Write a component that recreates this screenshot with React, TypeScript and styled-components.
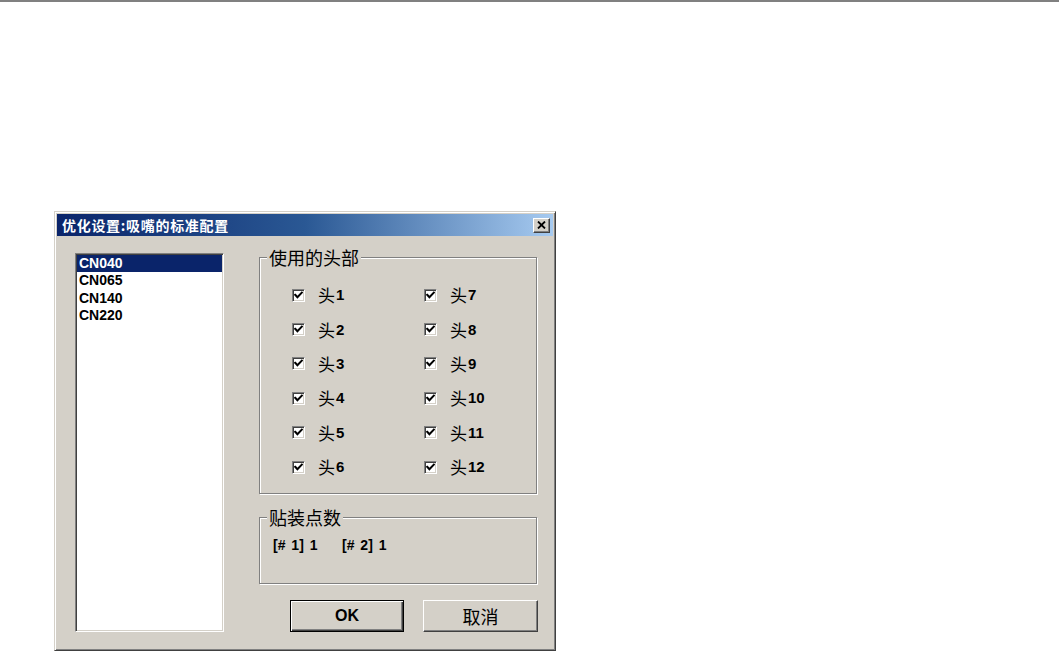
import React from "react";
import styled, { createGlobalStyle, css } from "styled-components";

const GlobalStyle = createGlobalStyle`
  body {
    margin: 0;
    background: #ffffff;
    font-family: "Liberation Sans", "Noto Sans CJK SC", sans-serif;
  }
`;

const nozzles = ["CN040", "CN065", "CN140", "CN220"];
const heads = Array.from({ length: 12 }, (_, i) => i + 1);
const counts = [
  { head: 1, value: 1 },
  { head: 2, value: 1 },
];

const CheckMark = () => (
  <svg width="9" height="9" viewBox="0 0 9 9">
    <polyline
      points="1.2,3.8 3.4,6.2 7.8,1.6"
      fill="none"
      stroke="#000"
      strokeWidth="2"
      strokeLinecap="square"
    />
  </svg>
);

const CloseGlyph = () => (
  <svg width="9" height="8" viewBox="0 0 9 8">
    <path d="M1 0.5 L8 7.5 M8 0.5 L1 7.5" stroke="#000" strokeWidth="1.8" />
  </svg>
);

export default function App() {
  return (
    <>
      <GlobalStyle />
      <TopRule />
      <Dialog>
        <TitleBar>
          <TitleText>优化设置:吸嘴的标准配置</TitleText>
          <CloseButton aria-label="关闭">
            <CloseGlyph />
          </CloseButton>
        </TitleBar>
        <Body>
          <ListBox>
            {nozzles.map((n, i) => (
              <ListItem key={n} $selected={i === 0}>
                {n}
              </ListItem>
            ))}
          </ListBox>
          <Side>
            <GroupBox $height={237}>
              <GroupLabel>使用的头部</GroupLabel>
              <HeadGrid>
                {heads.map((h) => (
                  <CheckItem key={h}>
                    <CheckBox>
                      <CheckMark />
                    </CheckBox>
                    <HeadLabel>
                      <Han>头</Han>
                      {h}
                    </HeadLabel>
                  </CheckItem>
                ))}
              </HeadGrid>
            </GroupBox>
            <GroupBox $height={67} $gapTop={23}>
              <GroupLabel>贴装点数</GroupLabel>
              <Counts>
                {counts.map((c) => (
                  <Count key={c.head}>
                    [# {c.head}] {c.value}
                  </Count>
                ))}
              </Counts>
            </GroupBox>
            <ButtonRow>
              <Button $default>OK</Button>
              <Button $cjk>取消</Button>
            </ButtonRow>
          </Side>
        </Body>
      </Dialog>
    </>
  );
}

const TopRule = styled.div`
  height: 2px;
  background: #808080;
`;

const Dialog = styled.div`
  box-sizing: border-box;
  width: 502px;
  height: 440px;
  margin: 209px 0 0 54px;
  padding: 2px;
  background: #d4d0c8;
  border: 1px solid;
  border-color: #d4d0c8 #404040 #404040 #d4d0c8;
  box-shadow: inset 1px 1px 0 #ffffff, inset -1px -1px 0 #808080;
`;

const TitleBar = styled.div`
  height: 22px;
  display: flex;
  align-items: center;
  justify-content: space-between;
  padding: 0 3px 0 5px;
  background: linear-gradient(to right, #0a246a 0%, #2a5894 50%, #a6caf0 100%);
`;

const TitleText = styled.span`
  color: #ffffff;
  font-family: "Noto Sans CJK SC", sans-serif;
  font-weight: 700;
  font-size: 14px;
  letter-spacing: 0.7px;
  line-height: 22px;
  white-space: nowrap;
`;

const CloseButton = styled.button`
  box-sizing: border-box;
  width: 17px;
  height: 15px;
  padding: 0;
  display: flex;
  align-items: center;
  justify-content: center;
  background: #d4d0c8;
  border: 1px solid;
  border-color: #ffffff #404040 #404040 #ffffff;
  box-shadow: inset -1px -1px 0 #808080;
`;

const Body = styled.div`
  display: grid;
  grid-template-columns: 149px 279px;
  column-gap: 35px;
  padding: 17px 15px 0 18px;
`;

const ListBox = styled.div`
  box-sizing: border-box;
  height: 379px;
  padding: 1px;
  background: #ffffff;
  border: 1px solid;
  border-color: #808080 #ffffff #ffffff #808080;
  box-shadow: inset 1px 1px 0 #404040, inset -1px -1px 0 #d4d0c8;
`;

const ListItem = styled.div<{ $selected?: boolean }>`
  height: 17.4px;
  padding-left: 2px;
  font-size: 14px;
  font-weight: 700;
  line-height: 17.4px;
  color: #000000;
  ${(p) =>
    p.$selected &&
    css`
      background: #0a246a;
      color: #ffffff;
    `}
`;

const Side = styled.div`
  display: flex;
  flex-direction: column;
  padding-top: 4px;
`;

const GroupBox = styled.div<{ $height: number; $gapTop?: number }>`
  position: relative;
  box-sizing: border-box;
  width: 278px;
  height: ${(p) => p.$height}px;
  margin-top: ${(p) => p.$gapTop ?? 0}px;
  border: 1px solid #808080;
  box-shadow: 1px 1px 0 #ffffff, inset 1px 1px 0 #ffffff;
`;

const GroupLabel = styled.span`
  position: absolute;
  top: -12px;
  left: 7px;
  padding: 0 2px;
  background: #d4d0c8;
  font-family: "Noto Sans CJK SC", sans-serif;
  font-size: 18px;
  line-height: 22px;
  color: #000000;
`;

const HeadGrid = styled.div`
  display: grid;
  grid-template-columns: 132px 1fr;
  grid-template-rows: repeat(6, 34.4px);
  grid-auto-flow: column;
  padding: 20px 0 0 32px;
`;

const CheckItem = styled.div`
  display: flex;
  align-items: center;
  gap: 13px;
`;

const CheckBox = styled.span`
  box-sizing: border-box;
  width: 13px;
  height: 13px;
  display: flex;
  align-items: center;
  justify-content: center;
  background: #ffffff;
  border: 1px solid;
  border-color: #808080 #ffffff #ffffff #808080;
  box-shadow: inset 1px 1px 0 #404040, inset -1px -1px 0 #d4d0c8;
`;

const HeadLabel = styled.span`
  display: flex;
  align-items: center;
  font-size: 15px;
  font-weight: 700;
  line-height: 18px;
  color: #000000;
`;

const Han = styled.span`
  font-family: "Noto Sans CJK SC", sans-serif;
  font-size: 17px;
  font-weight: 400;
  margin-right: 1px;
`;

const Counts = styled.div`
  display: flex;
  padding: 19px 0 0 13px;
`;

const Count = styled.span`
  width: 69px;
  font-size: 14px;
  font-weight: 700;
  line-height: 16px;
  word-spacing: 2px;
  color: #000000;
  white-space: nowrap;
`;

const ButtonRow = styled.div`
  display: flex;
  justify-content: flex-end;
  gap: 19px;
  margin-top: 16px;
`;

const Button = styled.button<{ $default?: boolean; $cjk?: boolean }>`
  box-sizing: border-box;
  width: ${(p) => (p.$default ? 114 : 115)}px;
  height: 32px;
  padding: 0;
  background: #d4d0c8;
  color: #000000;
  font-family: ${(p) =>
    p.$cjk ? `"Noto Sans CJK SC", sans-serif` : `"Liberation Sans", sans-serif`};
  font-size: ${(p) => (p.$cjk ? 18 : 16)}px;
  font-weight: ${(p) => (p.$cjk ? 400 : 700)};
  ${(p) =>
    p.$default
      ? css`
          border: 1px solid #000000;
          box-shadow: inset 1px 1px 0 #ffffff, inset -1px -1px 0 #404040,
            inset -2px -2px 0 #808080;
        `
      : css`
          border: 1px solid;
          border-color: #ffffff #404040 #404040 #ffffff;
          box-shadow: inset -1px -1px 0 #808080;
        `}
`;
